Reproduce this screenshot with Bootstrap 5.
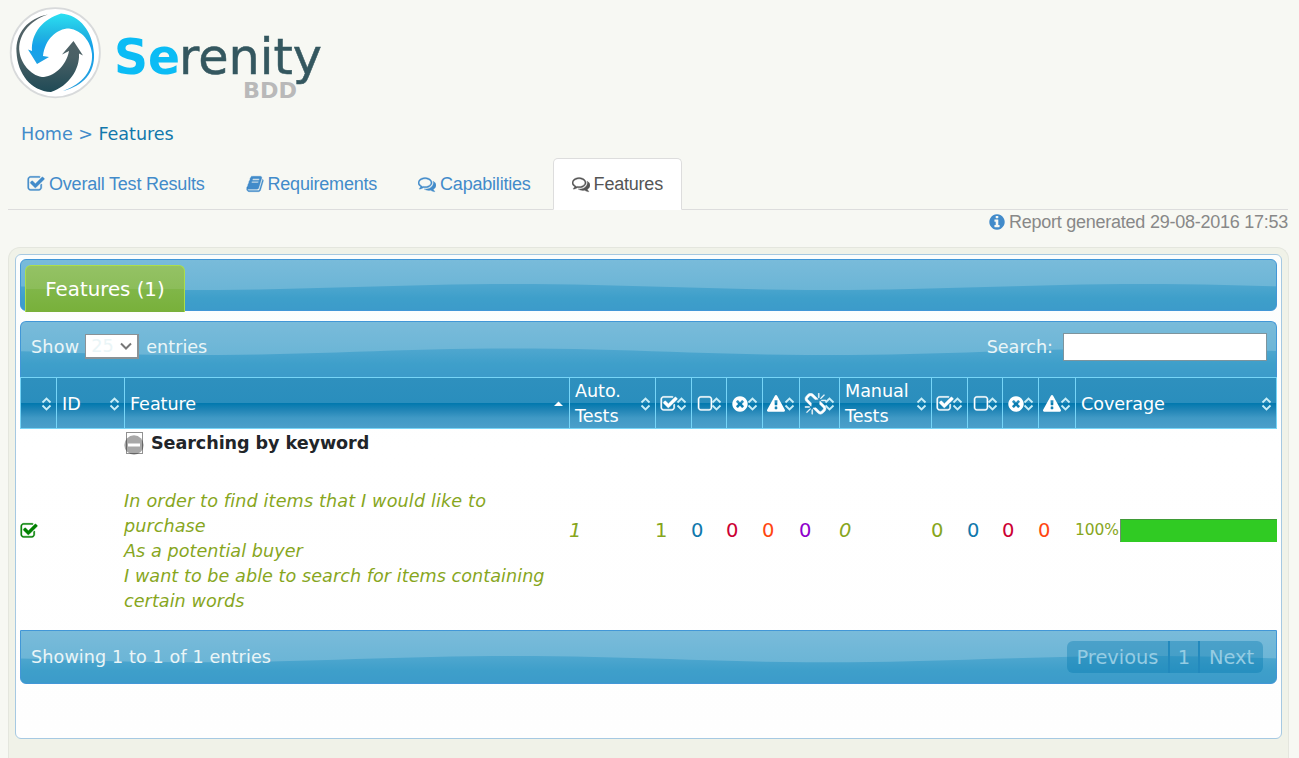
<!DOCTYPE html>
<html lang="en">
<head>
<meta charset="utf-8">
<meta name="viewport" content="width=device-width, initial-scale=1">
<title>Serenity Reports</title>
<link rel="stylesheet" href="https://cdn.jsdelivr.net/npm/bootstrap@5.3.0/dist/css/bootstrap.min.css">
<style>
:root{--wave:url("data:image/svg+xml,%3Csvg xmlns='http://www.w3.org/2000/svg' viewBox='0 0 630 100' preserveAspectRatio='none'%3E%3Cdefs%3E%3ClinearGradient id='a' x2='0' y2='1'%3E%3Cstop stop-color='%2379bbda'/%3E%3Cstop offset='.6' stop-color='%236bb5d6'/%3E%3C/linearGradient%3E%3ClinearGradient id='b' gradientUnits='userSpaceOnUse' x1='0' x2='0' y1='48' y2='100'%3E%3Cstop stop-color='%234fa7cf'/%3E%3Cstop offset='.55' stop-color='%233e9fca'/%3E%3Cstop offset='1' stop-color='%233c9bca'/%3E%3C/linearGradient%3E%3C/defs%3E%3Cpath fill='url(%23a)' d='M0 0H630V100H0z'/%3E%3Cpath fill='url(%23b)' d='M0 48C115 48 200 60 315 60S515 48 630 48V100H0z'/%3E%3C/svg%3E")}
body{background:#f7f8f3;font-family:"DejaVu Sans",Verdana,sans-serif;font-size:17.6px;line-height:25px;height:758px;overflow:hidden}
.fa-i{width:18px;height:18px;fill:currentColor;stroke:currentColor;stroke-width:36;flex:none}
.logo-row{height:110px}
.crumbs{height:48px;padding:12px 0 0 21px;color:#428bca;letter-spacing:-.06px}
.crumbs a{color:#428bca;text-decoration:none}
.crumbs span{color:#1278ac}
.main-tabs{margin:0 11px 0 8px;height:52px;border-bottom:1px solid #ddd;font-family:"Liberation Sans",Arial,sans-serif;font-size:18px;letter-spacing:-.21px}
.main-tabs .nav-link{height:52px;padding:0 18px;margin-right:3px;display:flex;align-items:center;gap:4px;color:#428bca;border:1px solid transparent;border-radius:5px 5px 0 0;margin-bottom:-1px}
.main-tabs .nav-link.active{color:#555;background:#fff;border-color:#ddd #ddd #fff}
.report{height:37px;padding-right:11px;font-family:"Liberation Sans",Arial,sans-serif;font-size:18px;color:#888;gap:3px;letter-spacing:-.25px}
.report svg{color:#428bca;margin-top:3px}
.outer{margin:0 10px 0 8px;height:511px;border:1px solid #e4e6de;border-bottom:0;border-radius:12px 12px 0 0;background:#f0f2e8;padding:6px}
.panel{height:485px;border:1px solid #a6c9e2;border-radius:6px;background:linear-gradient(#fbfdfd,#fff 40%,#fefefe);padding:4px}
.wave{border:1px solid #4297d7;background:var(--wave) 492px 0/630px 100%;color:#eaf5f7}
.tabbar{height:52px;border-radius:6px;padding:5px 0 0 4px;margin-bottom:10px}
.tabbar .feat{width:160px;height:47px;border:1px solid #acdd4a;border-bottom:0;border-radius:6px 6px 0 0;color:#fff;font-size:19.8px;background:linear-gradient(#94c264,#8cbd5a 49%,#80b648 51%,#78b03a)}
.toolbar-top{height:56px;border-bottom:0;border-radius:6px 6px 0 0;padding:0 9px 5px 10px}
.len{width:54px;height:25px;border:2px solid #8a9296;border-width:1px 2px 2px 1px;background:#fff;color:#eaf5f7;padding:0 5px;margin:-1px 7px 0 6px}
.find{width:204px;height:28px;border:1px solid #7d949d;background:#fff;margin:-1px 0 0 10px;padding:0 4px;outline:0}
.grid-t{width:1257px;table-layout:fixed;border-collapse:separate;border-spacing:0;margin:0}
.grid-t th{height:52px;padding:0 4px 0 5px;border:1px solid #77d5f7;border-right:0;font-weight:400;color:#fff;background:linear-gradient(#2e90be 0,#2a8ebd 49%,#0078ae 50%,#2386b7 65%,#4099c5 80%,#4a9fca)}
.grid-t th:last-child{border-right:1px solid #77d5f7}
.grid-t th{letter-spacing:-.05px;padding-top:2px;line-height:25px}
.th-in{display:flex;align-items:center;justify-content:space-between;height:48px}
.th-in .fa-i{margin-left:-1px}
.sort{width:11px;height:14px;margin-left:-6px;fill:none;stroke:#c9eef8;stroke-width:1.8;flex:none}
.grid-t td{height:201px;padding:2px 0 0;vertical-align:middle}
.num{font-size:19.5px}
.g{color:#87a61d}.b{color:#1078ac}.r{color:#cc0033}.o{color:#ff4611}.p{color:#8e00cc}
.story{margin:33px 0 16px;font-style:italic;color:#87a61d;letter-spacing:.05px;white-space:nowrap}
.story span{letter-spacing:.15px}
.feature-name{letter-spacing:-.08px}
.pct{font-size:15.5px;width:46px;letter-spacing:-.1px}
.bar-c{width:157px;height:23px;background:#30cb23;border:1px solid #30cb23;border-top-color:#3f9a36;border-left-color:#6f8d6f}
.foot{height:54px;border-radius:0 0 6px 6px;padding:0 10px}
.foot-info{letter-spacing:.1px}
.pager{margin-right:3px}
.pager span{height:32px;padding-top:1px;background:rgba(0,120,174,.36);color:#95cce3;font-size:19.4px;display:flex;align-items:center;justify-content:center}
.pager span+span{border-left:2px solid #2289bd}
</style>
</head>
<body>
<svg width="0" height="0" class="position-absolute" aria-hidden="true">
<symbol id="check" viewBox="0 0 1792 1792"><path d="M1472 930v318q0 119-84.5 203.5t-203.5 84.5h-832q-119 0-203.5-84.5t-84.5-203.5v-832q0-119 84.5-203.5t203.5-84.5h832q63 0 117 25 15 7 18 23 3 17-9 29l-49 49q-10 10-23 10-3 0-9-2-23-6-45-6h-832q-66 0-113 47t-47 113v832q0 66 47 113t113 47h832q66 0 113-47t47-113v-254q0-13 9-22l64-64q10-10 23-10 6 0 12 3 20 8 20 29zm231-489l-814 814q-24 24-57 24t-57-24l-430-430q-24-24-24-57t24-57l110-110q24-24 57-24t57 24l263 263 647-647q24-24 57-24t57 24l110 110q24 24 24 57t-24 57z"/></symbol>
<symbol id="square" viewBox="0 0 1792 1792"><path d="M1312 256h-832q-66 0-113 47t-47 113v832q0 66 47 113t113 47h832q66 0 113-47t47-113v-832q0-66-47-113t-113-47zm288 160v832q0 119-84.5 203.5t-203.5 84.5h-832q-119 0-203.5-84.5t-84.5-203.5v-832q0-119 84.5-203.5t203.5-84.5h832q119 0 203.5 84.5t84.5 203.5z"/></symbol>
<symbol id="times" viewBox="0 0 1792 1792"><path stroke="none" d="M1277 1122q0-26-19-45l-181-181 181-181q19-19 19-45 0-27-19-46l-90-90q-19-19-46-19-26 0-45 19l-181 181-181-181q-19-19-45-19-27 0-46 19l-90 90q-19 19-19 46 0 26 19 45l181 181-181 181q-19 19-19 45 0 27 19 46l90 90q19 19 46 19 26 0 45-19l181-181 181 181q19 19 45 19 27 0 46-19l90-90q19-19 19-46zm387-226q0 209-103 385.5t-279.5 279.5-385.5 103-385.5-103-279.5-279.5-103-385.5 103-385.5 279.5-279.5 385.5-103 385.5 103 279.5 279.5 103 385.5z"/></symbol>
<symbol id="info" viewBox="0 0 1792 1792"><path stroke="none" d="M1152 1376v-160q0-14-9-23t-23-9h-96v-512q0-14-9-23t-23-9h-320q-14 0-23 9t-9 23v160q0 14 9 23t23 9h96v320h-96q-14 0-23 9t-9 23v160q0 14 9 23t23 9h448q14 0 23-9t9-23zm-128-896v-160q0-14-9-23t-23-9h-192q-14 0-23 9t-9 23v160q0 14 9 23t23 9h192q14 0 23-9t9-23zm640 416q0 209-103 385.5t-279.5 279.5-385.5 103-385.5-103-279.5-279.5-103-385.5 103-385.5 279.5-279.5 385.5-103 385.5 103 279.5 279.5 103 385.5z"/></symbol>
<symbol id="warn" viewBox="0 0 1792 1792"><path stroke="none" d="M1024 1375v-190q0-14-9.5-23.5t-22.5-9.5h-192q-13 0-22.5 9.5t-9.5 23.5v190q0 14 9.5 23.5t22.5 9.5h192q13 0 22.5-9.5t9.5-23.5zm-2-374l18-459q0-12-10-19-13-11-24-11h-220q-11 0-24 11-10 7-10 21l17 457q0 10 10 16.5t24 6.5h185q14 0 23.5-6.5t10.5-16.5zm-14-934l768 1408q35 63-2 126-17 29-46.5 46t-63.5 17h-1536q-34 0-63.5-17t-46.5-46q-37-63-2-126l768-1408q17-31 47-49t65-18 65 18 47 49z"/></symbol>
<symbol id="book" viewBox="0 0 1792 1792"><path d="M1703 478q40 57 18 129l-275 906q-19 64-76.5 107.5t-122.5 43.5h-923q-77 0-148.5-53.5t-99.5-131.5q-24-67-2-127 0-4 3-27t4-37q1-8-3-21.5t-3-19.5q2-11 8-21t16.5-23.5 16.5-23.5q23-38 45-91.5t30-91.5q3-10 .5-30t-.5-28q3-11 17-28t17-23q21-36 42-92t25-90q1-9-2.5-32t.5-28q4-13 22-30.5t22-22.5q19-26 42.5-84.5t27.5-96.5q1-8-3-25.5t-2-26.5q2-8 9-18t18-23 17-21q8-12 16.5-30.5t15-35 16-36 19.5-32 26.5-23.5 36-11.5 47.5 5.5l-1 3q38-9 51-9h761q74 0 114 56t18 130l-274 906q-36 119-71.5 153.5t-128.5 34.5h-869q-27 0-38 15-11 16-1 43 24 70 144 70h923q29 0 56-15.5t35-41.5l300-987q7-22 5-57 38 15 59 43zm-1064 2q-4 13 2 22.5t20 9.5h608q13 0 25.5-9.5t16.5-22.5l21-64q4-13-2-22.5t-20-9.5h-608q-13 0-25.5 9.5t-16.5 22.5zm-83 256q-4 13 2 22.5t20 9.5h608q13 0 25.5-9.5t16.5-22.5l21-64q4-13-2-22.5t-20-9.5h-608q-13 0-25.5 9.5t-16.5 22.5z"/></symbol>
<symbol id="comments" viewBox="0 0 1792 1792"><path d="M704 384q-153 0-286 52t-211.5 141-78.5 191q0 82 53 158t149 132l97 56-35 84q34-20 62-39l44-31 53 10q78 14 153 14 153 0 286-52t211.5-141 78.5-191-78.5-191-211.5-141-286-52zm0-128q191 0 353.5 68.5t256.5 186.5 94 257-94 257-256.5 186.5-353.5 68.5q-86 0-176-16-124 88-278 128-36 9-86 16h-3q-11 0-20.5-8t-11.5-21q-1-3-1-6.5t.5-6.5 2-6l2.5-5 3.5-5.5 4-5 4.5-5 4-4.5q5-6 23-25t26-29.5 22.5-29 25-38.5 20.5-44q-124-72-195-177t-71-224q0-139 94-257t256.5-186.5 353.5-68.5zm822 1169q10 24 20.5 44t25 38.5 22.5 29 26 29.5 23 25q1 1 4 4.5t4.5 5 4 5 3.5 5.5l2.5 5 2 6 .5 6.5-1 6.5q-3 14-13 22t-22 7q-50-7-86-16-154-40-278-128-90 16-176 16-271 0-472-132 58 4 88 4 161 0 309-45t264-129q125-92 192-212t67-254q0-77-23-152 129 71 204 178t75 230q0 120-71 224.5t-195 176.5z"/></symbol>
<symbol id="broken" viewBox="0 0 1792 1792"><path d="M503 1271l-256 256q-10 9-23 9-12 0-23-9-9-10-9-23t9-23l256-256q10-9 23-9t23 9q9 10 9 23t-9 23zm169 41v320q0 14-9 23t-23 9-23-9-9-23v-320q0-14 9-23t23-9 23 9 9 23zm-224-224q0 14-9 23t-23 9h-320q-14 0-23-9t-9-23 9-23 23-9h320q14 0 23 9t9 23zm1264 128q0 120-85 203l-147 146q-83 83-203 83-121 0-204-85l-334-335q-21-21-42-56l239-18 273 274q28 28 68 27.5t68-27.5l147-146q28-28 28-67 0-40-28-68l-274-275 18-239q35 21 56 42l336 336q84 86 84 204zm-617-724l-239 18-273-274q-28-28-68-28-39 0-68 27l-147 146q-28 28-28 67 0 40 28 68l274 274-18 240q-35-21-56-42l-336-336q-84-86-84-204 0-120 85-203l147-146q83-83 203-83 121 0 204 85l334 335q21 21 42 56zm633 84q0 14-9 23t-23 9h-320q-14 0-23-9t-9-23 9-23 23-9h320q14 0 23 9t9 23zm-544-544v320q0 14-9 23t-23 9-23-9-9-23v-320q0-14 9-23t23-9 23 9 9 23zm407 151l-256 256q-11 9-23 9t-23-9q-9-10-9-23t9-23l256-256q10-9 23-9t23 9q9 10 9 23t-9 23z"/></symbol>
<symbol id="updown" viewBox="0 0 11 14"><path d="M1.5 5.5l4-4 4 4M1.5 8.5l4 4 4-4"/></symbol>
</svg>

<header class="logo-row">
<svg width="330" height="110" viewBox="0 0 330 110" class="d-block" role="img" aria-label="Serenity BDD">
<defs>
<linearGradient id="lb" x2="0" y2="1"><stop stop-color="#2be0f2"/><stop offset=".28" stop-color="#20b4e2"/><stop offset=".42" stop-color="#16a2ea"/><stop offset="1" stop-color="#2a9fdc"/></linearGradient>
<linearGradient id="ld" x2="0" y2="1"><stop stop-color="#566468"/><stop offset=".55" stop-color="#4a6065"/><stop offset="1" stop-color="#1f4a56"/></linearGradient>
</defs>
<circle cx="55.3" cy="52.7" r="44.6" fill="#fff" stroke="#d8dadb" stroke-width="1.8"/>
<path fill="url(#ld)" d="M48 14.500C28 18 15.500 33 16.500 52C17.500 74 31 91 51 92C69 86 80 69 79 53.500L83 55.500L73.500 41L62 54.500L69 51C66 67 53 77 42 77C30 75 21 63 19.500 52C17.500 37 28 21 48 14.500Z"/>
<path fill="url(#lb)" d="M63 91C83 86 95 73 94 54C93 32 80 14.500 61 13.500C43 19 31 33 32 51L28 49.500L37 64L49 57L43 56C45 39 57 28.500 69 28.500C82 30 91 42 92 54C93 70 83 84 63 91Z"/>
<g font-family="DejaVu Sans, Verdana, sans-serif">
<text x="114" y="74" font-size="50" font-weight="700" fill="#0bbcf5" textLength="66" lengthAdjust="spacingAndGlyphs">Se</text>
<text x="179" y="74" font-size="50" fill="#34575f" stroke="#34575f" stroke-width=".5" textLength="143" lengthAdjust="spacingAndGlyphs">renity</text>
<text x="243" y="98" font-size="22" font-weight="700" fill="#b9b9b9" textLength="54" lengthAdjust="spacingAndGlyphs">BDD</text>
</g>
</svg>
</header>
<nav class="crumbs"><a href="#">Home</a> &gt; <span>Features</span></nav>
<ul class="nav main-tabs flex-nowrap">
<li class="nav-item"><a class="nav-link" href="#"><svg class="fa-i"><use href="#check"/></svg>Overall Test Results</a></li>
<li class="nav-item"><a class="nav-link" href="#"><svg class="fa-i"><use href="#book"/></svg>Requirements</a></li>
<li class="nav-item"><a class="nav-link" href="#"><svg class="fa-i"><use href="#comments"/></svg>Capabilities</a></li>
<li class="nav-item"><a class="nav-link active" href="#"><svg class="fa-i"><use href="#comments"/></svg>Features</a></li>
</ul>
<div class="report d-flex justify-content-end align-items-start"><svg class="fa-i"><use href="#info"/></svg><span>Report generated 29-08-2016 17:53</span></div>

<main class="outer">
<div class="panel">
<div class="wave tabbar"><div class="feat d-flex align-items-center justify-content-center">Features (1)</div></div>
<div class="wave toolbar-top d-flex align-items-center">
<span style="letter-spacing:.2px">Show</span>
<div class="len d-flex align-items-center justify-content-between"><span>25</span><svg width="12" height="8" viewBox="0 0 12 8" fill="none" stroke="#777" stroke-width="2"><path d="M1 1.500l5 5 5-5"/></svg></div>
<span>entries</span>
<label class="ms-auto" for="q">Search:</label><input id="q" class="find" type="text">
</div>
<table class="grid-t">
<colgroup><col style="width:36px"><col style="width:68px"><col style="width:445px"><col style="width:86px"><col style="width:36px"><col style="width:35px"><col style="width:36px"><col style="width:37px"><col style="width:40px"><col style="width:92px"><col style="width:36px"><col style="width:35px"><col style="width:36px"><col style="width:37px"><col style="width:202px"></colgroup>
<thead><tr>
<th><div class="th-in"><span></span><svg class="sort"><use href="#updown"/></svg></div></th>
<th><div class="th-in">ID<svg class="sort"><use href="#updown"/></svg></div></th>
<th><div class="th-in">Feature<svg class="sort" viewBox="0 0 11 14"><path d="M0 9L4.500 4.500L9 9z" fill="#fff" stroke="none"/></svg></div></th>
<th><div class="th-in"><span>Auto.<br>Tests</span><svg class="sort"><use href="#updown"/></svg></div></th>
<th><div class="th-in"><svg class="fa-i"><use href="#check"/></svg><svg class="sort"><use href="#updown"/></svg></div></th>
<th><div class="th-in"><svg class="fa-i"><use href="#square"/></svg><svg class="sort"><use href="#updown"/></svg></div></th>
<th><div class="th-in"><svg class="fa-i"><use href="#times"/></svg><svg class="sort"><use href="#updown"/></svg></div></th>
<th><div class="th-in"><svg class="fa-i"><use href="#warn"/></svg><svg class="sort"><use href="#updown"/></svg></div></th>
<th><div class="th-in"><svg class="fa-i" style="width:23px;height:23px"><use href="#broken"/></svg><svg class="sort"><use href="#updown"/></svg></div></th>
<th><div class="th-in"><span>Manual<br>Tests</span><svg class="sort"><use href="#updown"/></svg></div></th>
<th><div class="th-in"><svg class="fa-i"><use href="#check"/></svg><svg class="sort"><use href="#updown"/></svg></div></th>
<th><div class="th-in"><svg class="fa-i"><use href="#square"/></svg><svg class="sort"><use href="#updown"/></svg></div></th>
<th><div class="th-in"><svg class="fa-i"><use href="#times"/></svg><svg class="sort"><use href="#updown"/></svg></div></th>
<th><div class="th-in"><svg class="fa-i"><use href="#warn"/></svg><svg class="sort"><use href="#updown"/></svg></div></th>
<th><div class="th-in">Coverage<svg class="sort"><use href="#updown"/></svg></div></th>
</tr></thead>
<tbody><tr>
<td><svg class="fa-i d-block" style="color:#008000"><use href="#check"/></svg></td>
<td></td>
<td>
<div class="d-flex align-items-center feature-name"><svg width="20" height="24" viewBox="0 0 20 24" style="margin-right:7px"><circle cx="10" cy="13" r="9.700" fill="#a8a8a8"/><path d="M4 13h12" stroke="#fff" stroke-width="3"/><rect x="2.500" y=".5" width="16" height="21" fill="none" stroke="#222" stroke-dasharray="1 1"/></svg><b>Searching by keyword</b></div>
<p class="story"><span>In order to find items that I would like to</span><br>purchase<br>As a potential buyer<br>I want to be able to search for items containing<br>certain words</p>
</td>
<td class="num g fst-italic">1</td><td class="num g">1</td><td class="num b">0</td><td class="num r">0</td><td class="num o">0</td><td class="num p">0</td><td class="num g fst-italic">0</td><td class="num g">0</td><td class="num b">0</td><td class="num r">0</td><td class="num o">0</td>
<td><div class="d-flex align-items-center"><span class="pct g">100%</span><div class="bar-c flex-shrink-0"></div></div></td>
</tr></tbody>
</table>
<div class="wave foot d-flex align-items-center justify-content-between"><span class="foot-info">Showing 1 to 1 of 1 entries</span>
<div class="pager d-flex"><span class="rounded-start" style="width:101px">Previous</span><span style="width:30px">1</span><span class="rounded-end" style="width:65px">Next</span></div></div>
</div>
</main>
<script src="https://cdn.jsdelivr.net/npm/bootstrap@5.3.0/dist/js/bootstrap.bundle.min.js"></script>
</body>
</html></script>
